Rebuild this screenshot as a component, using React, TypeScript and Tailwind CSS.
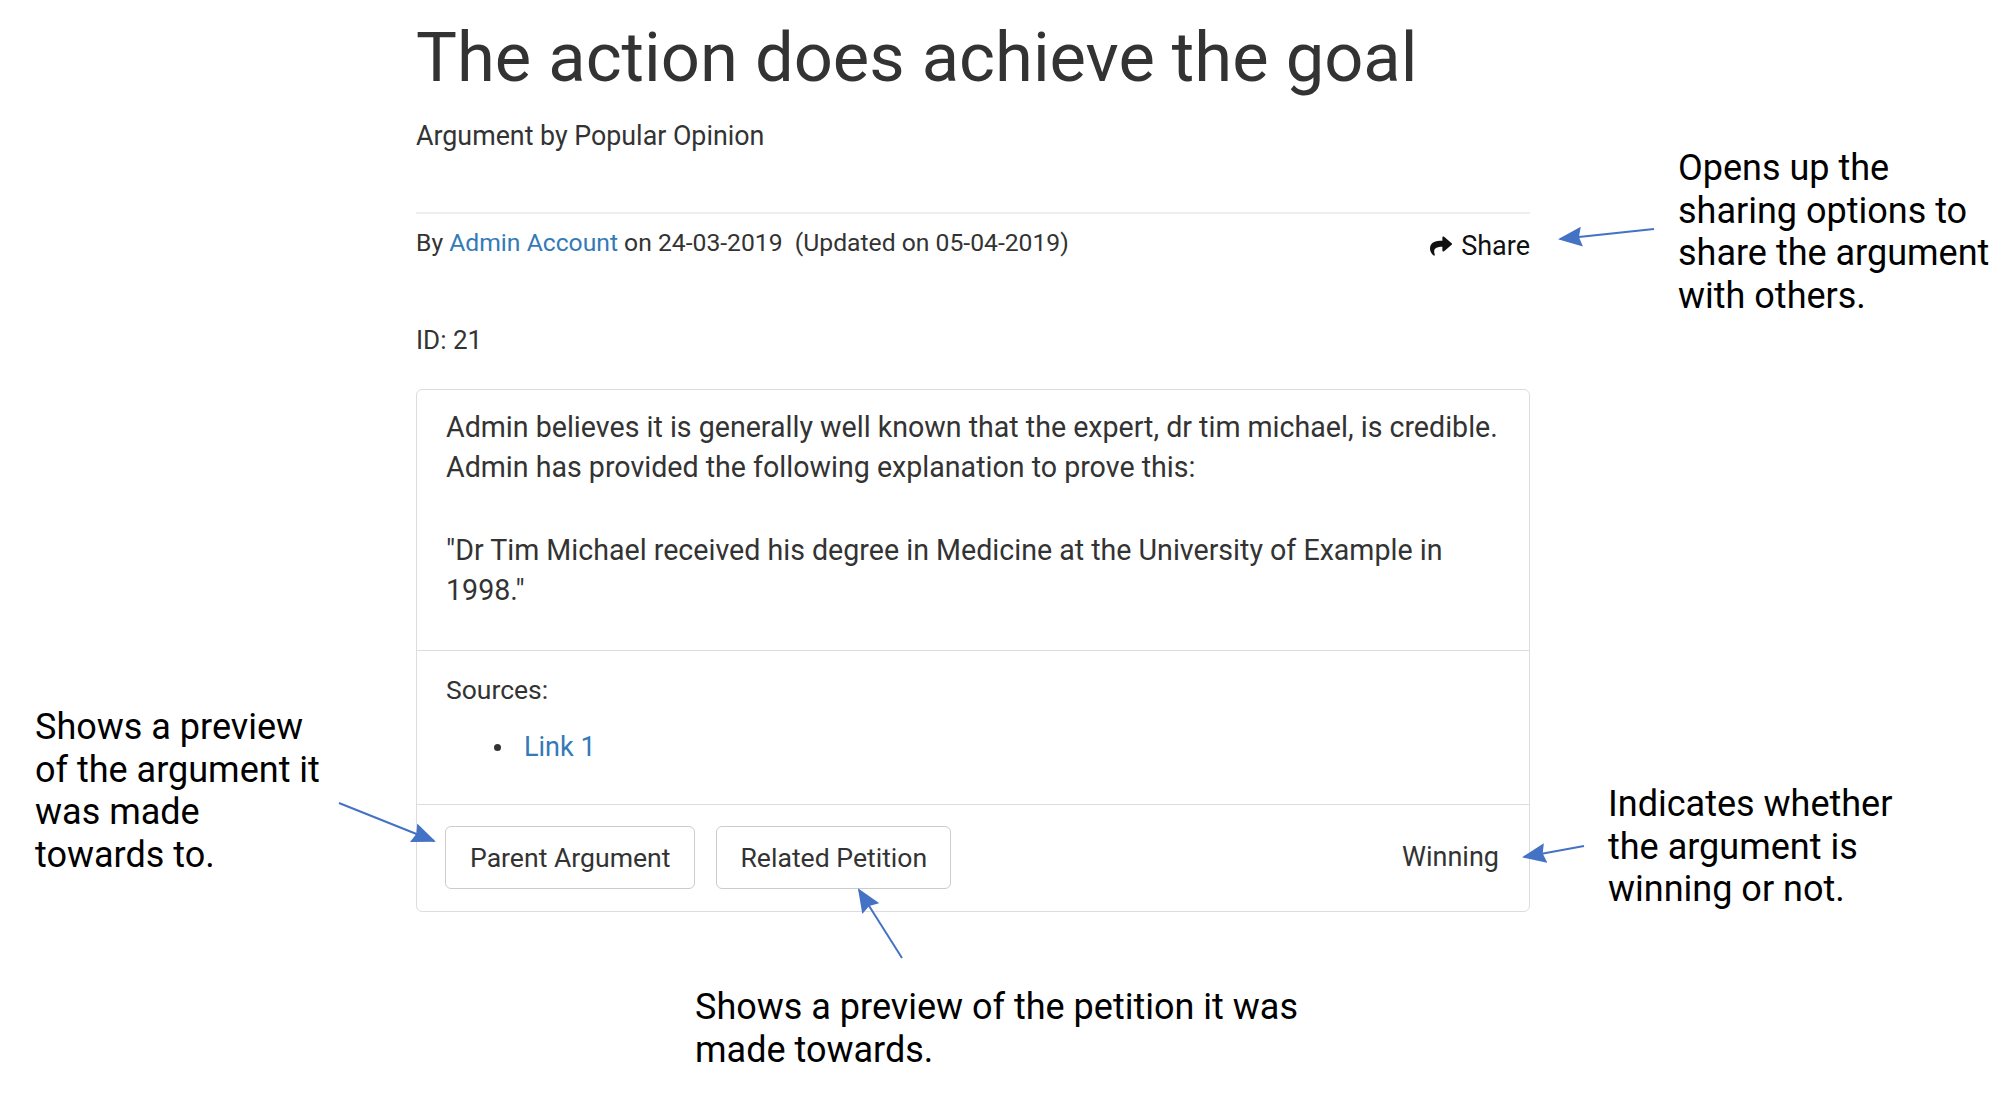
import React from 'react';
import { FaShare } from 'react-icons/fa';

const Note: React.FC<{ className: string; lines: string[] }> = ({ className, lines }) => (
  <div className={`absolute text-[36px] leading-[42.7px] text-black whitespace-nowrap ${className}`}>
    {lines.map((l) => (
      <div key={l}>{l}</div>
    ))}
  </div>
);

const Arrows: React.FC = () => (
  <svg className="absolute left-0 top-0 pointer-events-none" width={2006} height={1100}>
    <defs>
      <marker id="ah" markerWidth="24" markerHeight="20" refX="22" refY="10" orient="auto" markerUnits="userSpaceOnUse">
        <path d="M0,0 L24,10 L0,20 L3,10 z" fill="#4472c4" />
      </marker>
    </defs>
    <g stroke="#4472c4" strokeWidth={2} fill="none" markerEnd="url(#ah)">
      <line x1={1654} y1={229} x2={1560} y2={239} />
      <line x1={339} y1={803} x2={434} y2={841} />
      <line x1={1584} y1={846} x2={1524} y2={857} />
      <line x1={902} y1={958} x2={859} y2={890} />
    </g>
  </svg>
);

const App: React.FC = () => {
  return (
    <div className="relative w-[2006px] h-[1100px] bg-white overflow-hidden font-['Roboto',sans-serif] text-[#333]">
      <div className="ml-[416px] w-[1114px] flex flex-col">
        <h1 className="pt-[16px] text-[68.7px] leading-[84px] font-normal text-[#333]">
          The action does achieve the goal
        </h1>
        <div className="mt-[18px] text-[26.8px] leading-[36px]">Argument by Popular Opinion</div>

        <div className="mt-[58px] h-[2px] bg-[#eeeeee]" />

        <div className="mt-[11px] h-[36px] flex items-start justify-between">
          <div className="text-[24.7px] leading-[36px]">
            By <span className="text-[#337ab7]">Admin Account</span> on 24-03-2019{' '}
            {'\u00a0'}(Updated on 05-04-2019)
          </div>
          <button className="mt-[3px] flex items-center gap-[7px] text-[27px] leading-[36px] text-[#111]">
            <FaShare className="w-[26px] h-[22px]" />
            Share
          </button>
        </div>

        <div className="mt-[61px] text-[26px] leading-[36px]">ID: 21</div>

        <div className="mt-[31px] border border-[#dddddd] rounded-[6px] flex flex-col">
          <div className="pl-[29px] pr-[20px] pt-[17px] pb-[40px] text-[28.6px] leading-[40px]">
            <p>
              Admin believes it is generally well known that the expert, dr tim michael, is credible.
              <br />
              Admin has provided the following explanation to prove this:
            </p>
            <p className="mt-[43px]">
              "Dr Tim Michael received his degree in Medicine at the University of Example in
              <br />
              1998."
            </p>
          </div>
          <div className="border-t border-[#dddddd] pl-[29px] pt-[21px] pb-[39px] text-[26.5px] leading-[36px]">
            <div>Sources:</div>
            <ul className="mt-[21px]">
              <li className="flex items-center">
                <span className="ml-[48px] w-[7px] h-[7px] rounded-full bg-[#333]" />
                <span className="ml-[23px] text-[#337ab7] text-[27px]">Link 1</span>
              </li>
            </ul>
          </div>
          <div className="border-t border-[#dddddd] pl-[28px] pr-[30px] pt-[21px] pb-[22px] flex items-center">
            <div className="flex gap-[21px]">
              <button className="h-[63px] px-[24px] border border-[#cccccc] rounded-[6px] text-[26.6px] text-[#333]">
                Parent Argument
              </button>
              <button className="h-[63px] px-[23px] border border-[#cccccc] rounded-[6px] text-[26.6px] text-[#333]">
                Related Petition
              </button>
            </div>
            <div className="ml-auto text-[27px] text-[#333]">Winning</div>
          </div>
        </div>
      </div>

      <Note className="left-[1678px] top-[147px]" lines={['Opens up the', 'sharing options to', 'share the argument', 'with others.']} />
      <Note className="left-[35px] top-[706px]" lines={['Shows a preview', 'of the argument it', 'was made', 'towards to.']} />
      <Note className="left-[1608px] top-[783px]" lines={['Indicates whether', 'the argument is', 'winning or not.']} />
      <Note className="left-[695px] top-[986px]" lines={['Shows a preview of the petition it was', 'made towards.']} />

      <Arrows />
    </div>
  );
};

export default App;
